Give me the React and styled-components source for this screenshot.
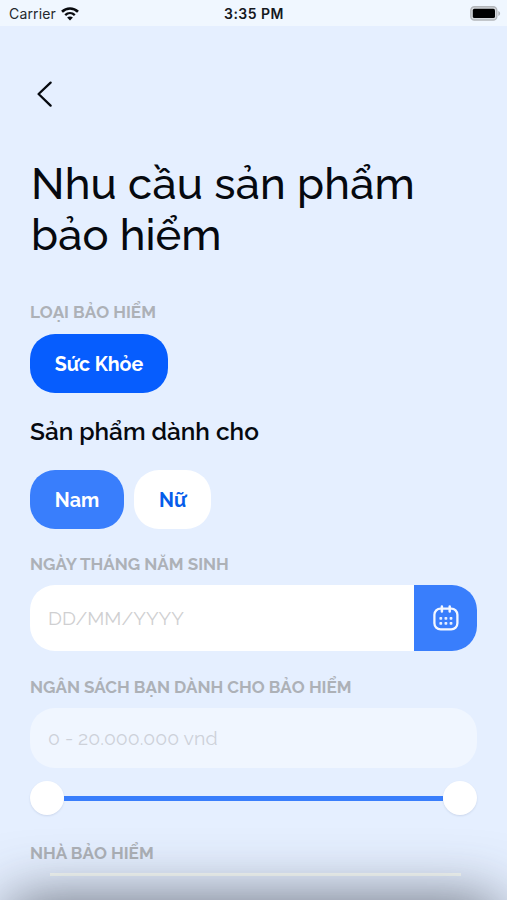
import React from "react";
import styled, { createGlobalStyle } from "styled-components";

const App = () => {
  return (
    <>
      <GlobalStyle />
      <Screen>
        <StatusBar>
          <Carrier>
            <span>Carrier</span>
            <WifiIcon />
          </Carrier>
          <Clock>3:35 PM</Clock>
          <BatteryIcon />
        </StatusBar>

        <Content>
          <BackButton type="button" aria-label="Back">
            <svg width="16" height="26" viewBox="0 0 16 26" fill="none">
              <path
                d="M13.6 1.6L1.6 13L13.6 24.6"
                stroke="#06090f"
                strokeWidth="2.3"
                strokeLinecap="round"
                strokeLinejoin="round"
              />
            </svg>
          </BackButton>

          <Title>
            <TitleLine $spacing="0.2px">Nhu cầu sản phẩm</TitleLine>
            <TitleLine $spacing="0.1px">bảo hiểm</TitleLine>
          </Title>

          <Label $top="42px">LOẠI BẢO HIỂM</Label>
          <Options $top="12px">
            <Pill $width="138px" $bg="#065dfe" $color="#fff">Sức Khỏe</Pill>
          </Options>

          <SubTitle>Sản phẩm dành cho</SubTitle>
          <Options $top="22px">
            <Pill $width="94px" $bg="#397efc" $color="#fff">Nam</Pill>
            <Pill $width="77px" $bg="#fff" $color="#065dea">Nữ</Pill>
          </Options>

          <Label $top="25px">NGÀY THÁNG NĂM SINH</Label>
          <Field $height="66px" $top="11px" $bg="#fff">
            <Placeholder $color="#cfcfd1">DD/MM/YYYY</Placeholder>
            <DateButton type="button" aria-label="Calendar">
              <CalendarIcon />
            </DateButton>
          </Field>

          <Label $top="26px">NGÂN SÁCH BẠN DÀNH CHO BẢO HIỂM</Label>
          <Field $height="60px" $top="11px" $bg="#f0f6ff">
            <Placeholder $color="#cdd1d9">0 - 20.000.000 vnd</Placeholder>
          </Field>

          <Slider>
            <Thumb />
            <Track />
            <Thumb />
          </Slider>

          <Label $top="28px">NHÀ BẢO HIỂM</Label>
          <NextField />
        </Content>
        <BottomShade />
      </Screen>
    </>
  );
};

export default App;

const WifiIcon = () => (
  <svg width="18" height="14" viewBox="0 0 18 14" fill="none" stroke="#090b0f">
    <path d="M1 4.8C5.5 0.4 12.5 0.4 17 4.8" strokeWidth="2.6" />
    <path d="M4.2 8.1C7 5.4 11 5.4 13.8 8.1" strokeWidth="2.4" />
    <path d="M9 13.4L6.1 10.5C7.6 9 10.4 9 11.9 10.5Z" fill="#090b0f" stroke="none" />
  </svg>
);

const BatteryIcon = () => (
  <svg width="31" height="15" viewBox="0 0 31 15">
    <rect x="0.8" y="0.8" width="26" height="13.2" rx="3.6" fill="#d5d8dc" stroke="#b3b6ba" strokeWidth="1.4" />
    <rect x="2.8" y="2.8" width="22.2" height="9.2" rx="1.6" fill="#000" />
    <path d="M28.3 5C30.7 5.8 30.7 9.2 28.3 10Z" fill="#b0b3b7" />
  </svg>
);

const CalendarIcon = () => (
  <svg width="26" height="26" viewBox="0 0 26 26" fill="none">
    <rect x="1.4" y="3.6" width="23" height="20.8" rx="6.2" stroke="#f3f7ff" strokeWidth="2.3" />
    <path d="M8.9 1.6V6.4M16.7 1.6V6.4" stroke="#f3f7ff" strokeWidth="2.5" strokeLinecap="round" />
    <g fill="#e6efff">
      <rect x="6.4" y="12" width="2.8" height="2.8" rx="0.8" />
      <rect x="11.5" y="12" width="2.8" height="2.8" rx="0.8" />
      <rect x="16.6" y="12" width="2.8" height="2.8" rx="0.8" />
      <rect x="6.4" y="17" width="2.8" height="2.8" rx="0.8" />
      <rect x="11.5" y="17" width="2.8" height="2.8" rx="0.8" />
      <rect x="16.6" y="17" width="2.8" height="2.8" rx="0.8" />
    </g>
  </svg>
);

const GlobalStyle = createGlobalStyle`
  * {
    box-sizing: border-box;
  }

  body {
    margin: 0;
    background-color: #e5efff;
    font-family: Raleway, Lato, "Open Sans", sans-serif;
  }

  button {
    border: 0;
    padding: 0;
    background: none;
    font-family: inherit;
  }
`;

const Screen = styled.div`
  position: relative;
  width: 507px;
  height: 900px;
  overflow: hidden;
  background-color: #e5efff;
`;

const StatusBar = styled.div`
  display: grid;
  grid-template-columns: 1fr auto 1fr;
  align-items: center;
  height: 26px;
  padding: 1px 6px 0 9px;
  background-color: #f0f7ff;
  font-family: Inter, sans-serif;
  font-size: 14px;
  letter-spacing: 0.15px;
  color: #25282d;

  > svg {
    justify-self: end;
  }
`;

const Carrier = styled.div`
  display: flex;
  align-items: center;
  gap: 5px;
`;

const Clock = styled.div`
  margin-right: 2px;
  font-weight: 600;
  letter-spacing: 0.5px;
  color: #15181d;
`;

const Content = styled.div`
  display: flex;
  flex-direction: column;
  padding: 55px 30px 0;
`;

const BackButton = styled.button`
  display: flex;
  width: 16px;
  height: 26px;
  margin-left: 7px;
`;

const Title = styled.h1`
  margin: 51px 0 0 1px;
  font-size: 43.5px;
  font-weight: 500;
  line-height: 51px;
  color: #06090f;
`;

const TitleLine = styled.span`
  display: block;
  white-space: nowrap;
  letter-spacing: ${(props) => props.$spacing};
`;

const Label = styled.div`
  margin-top: ${(props) => props.$top};
  height: 20px;
  font-size: 17.1px;
  font-weight: 700;
  line-height: 20px;
  white-space: nowrap;
  color: #adb1b7;
`;

const Options = styled.div`
  display: flex;
  gap: 10px;
  margin-top: ${(props) => props.$top};
`;

const Pill = styled.button`
  width: ${(props) => props.$width};
  height: 59px;
  padding-top: 2px;
  border-radius: 25px;
  background-color: ${(props) => props.$bg};
  color: ${(props) => props.$color};
  font-size: 19.6px;
  font-weight: 700;
`;

const SubTitle = styled.h2`
  margin: 23px 0 0;
  font-size: 24.4px;
  font-weight: 600;
  line-height: 32px;
  white-space: nowrap;
  color: #06090f;
`;

const Field = styled.div`
  display: flex;
  align-items: center;
  justify-content: space-between;
  height: ${(props) => props.$height};
  margin-top: ${(props) => props.$top};
  padding-left: 18px;
  border-radius: 25px;
  overflow: hidden;
  background-color: ${(props) => props.$bg};
`;

const Placeholder = styled.span`
  font-size: 19.5px;
  white-space: nowrap;
  color: ${(props) => props.$color};
`;

const DateButton = styled.button`
  display: flex;
  align-items: center;
  justify-content: center;
  width: 63px;
  height: 100%;
  background-color: #397efc;
`;

const Slider = styled.div`
  display: flex;
  align-items: center;
  height: 34px;
  margin-top: 13px;
`;

const Thumb = styled.div`
  width: 34px;
  height: 34px;
  border-radius: 50%;
  background-color: #fff;
  box-shadow: 0 1px 2px rgba(60, 80, 130, 0.14);
`;

const Track = styled.div`
  flex: 1;
  height: 5px;
  background-color: #397efc;
`;

/* only the top edge of this one is on screen */
const NextField = styled.div`
  height: 3px;
  margin: 10px 16px 0 20px;
  background-color: #fbfffc;
`;

/* shadow thrown up by the sheet below the screen */
const BottomShade = styled.div`
  position: absolute;
  left: 8px;
  right: 8px;
  top: 100%;
  height: 80px;
  border-radius: 12px;
  box-shadow: 0 0 60px rgba(50, 54, 64, 0.7);
`;
